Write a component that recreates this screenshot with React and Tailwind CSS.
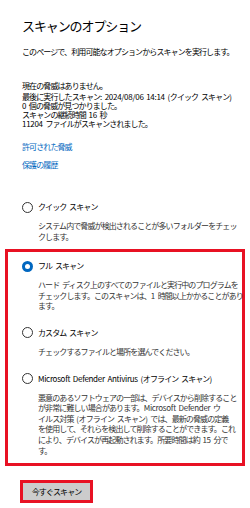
import React from "react";

// Split a string into ASCII and non-ASCII runs so CJK gets tighter tracking than Latin.
const T = ({ children }) => {
  const parts = String(children).match(/[\x20-\x7e]+|[^\x20-\x7e]+/g) || [];
  return (
    <>
      {parts.map((p, i) =>
        /^[\x20-\x7e]+$/.test(p) ? (
          <span key={i} className="inline-block whitespace-pre tracking-[-0.3px] [word-spacing:1.2px]">{p}</span>
        ) : (
          <span key={i} className="inline-block whitespace-pre tracking-[-0.9px] [word-spacing:1.5px]">{p}</span>
        )
      )}
    </>
  );
};

const Lines = ({ lines, className }) => (
  <div className={className}>
    {lines.map((l, i) => (
      <div key={i} className="whitespace-nowrap"><T>{l}</T></div>
    ))}
  </div>
);

const Radio = ({ checked }) =>
  checked ? (
    <span className="flex h-[11px] w-[11px] shrink-0 items-center justify-center rounded-full bg-[#0067c0]">
      <span className="h-[5px] w-[5px] rounded-full bg-white" />
    </span>
  ) : (
    <span className="h-[11px] w-[11px] shrink-0 rounded-full border border-[#333333] bg-white" />
  );

const Option = ({ checked, label, desc, className }) => (
  <div className={className}>
    <div className="flex h-[12px] items-center">
      <Radio checked={checked} />
      <span className="ml-[5px] whitespace-nowrap text-[8px] leading-[12px] text-black"><T>{label}</T></span>
    </div>
    <Lines lines={desc} className="mt-[8px] pl-[16px] text-[8px] leading-[10.6px] text-[#333333]" />
  </div>
);

export default function App() {
  return (
    <div
      className="h-[508px] w-[250px] overflow-hidden bg-white text-black"
      style={{ fontFamily: '"Noto Sans CJK JP", "Noto Sans", sans-serif' }}
    >
      <div className="pl-[22px] pt-[17px]">
        <h1 className="whitespace-nowrap text-[13px] font-normal leading-[18px] tracking-[-1.1px]">スキャンのオプション</h1>
        <p className="mt-[12px] whitespace-nowrap text-[8px] leading-[10px]"><T>このページで、利用可能なオプションからスキャンを実行します。</T></p>
        <div className="mt-[24px] text-[8px] leading-[9px]">
          <div className="whitespace-nowrap"><T>現在の脅威はありません。</T></div>
          <div className="mt-[2px] whitespace-nowrap"><T>最後に実行したスキャン: 2024/08/06 14:14 (クイック スキャン)</T></div>
          <div className="whitespace-nowrap"><T>0 個の脅威が見つかりました。</T></div>
          <div className="whitespace-nowrap"><T>スキャンの継続時間 16 秒</T></div>
          <div className="whitespace-nowrap"><T>11204 ファイルがスキャンされました。</T></div>
        </div>
        <div className="mt-[14px] text-[8px] leading-[10px] text-[#0067c0]"><T>許可された脅威</T></div>
        <div className="mt-[8px] text-[8px] leading-[10px] text-[#0067c0]"><T>保護の履歴</T></div>
        <Option
          className="mt-[31px]"
          label="クイック スキャン"
          desc={["システム内で脅威が検出されることが多いフォルダーをチェッ", "クします。"]}
        />
      </div>

      <div className="mx-[5px] mt-[7px] border-[3px] border-[#e81123] pb-[7px] pl-[14px] pt-[8px]">
        <Option
          checked
          label="フル スキャン"
          desc={[
            "ハード ディスク上のすべてのファイルと実行中のプログラムを",
            "チェックします。このスキャンは、1 時間以上かかることがあり",
            "ます。",
          ]}
        />
        <Option className="mt-[15px]" label="カスタム スキャン" desc={["チェックするファイルと場所を選んでください。"]} />
        <Option
          className="mt-[15px]"
          label="Microsoft Defender Antivirus (オフライン スキャン)"
          desc={[
            "悪意のあるソフトウェアの一部は、デバイスから削除すること",
            "が非常に難しい場合があります。Microsoft Defender ウ",
            "イルス対策 (オフライン スキャン) では、最新の脅威の定義",
            "を使用して、それらを検出して削除することができます。これ",
            "により、デバイスが再起動されます。所要時間は約 15 分で",
            "す。",
          ]}
        />
      </div>

      <div className="ml-[20px] mt-[14px] w-[73px] border-[3px] border-[#e81123]">
        <div className="flex h-[17px] items-center justify-center bg-[#cccccc] text-[8px] text-black">
          <T>今すぐスキャン</T>
        </div>
      </div>
    </div>
  );
}
